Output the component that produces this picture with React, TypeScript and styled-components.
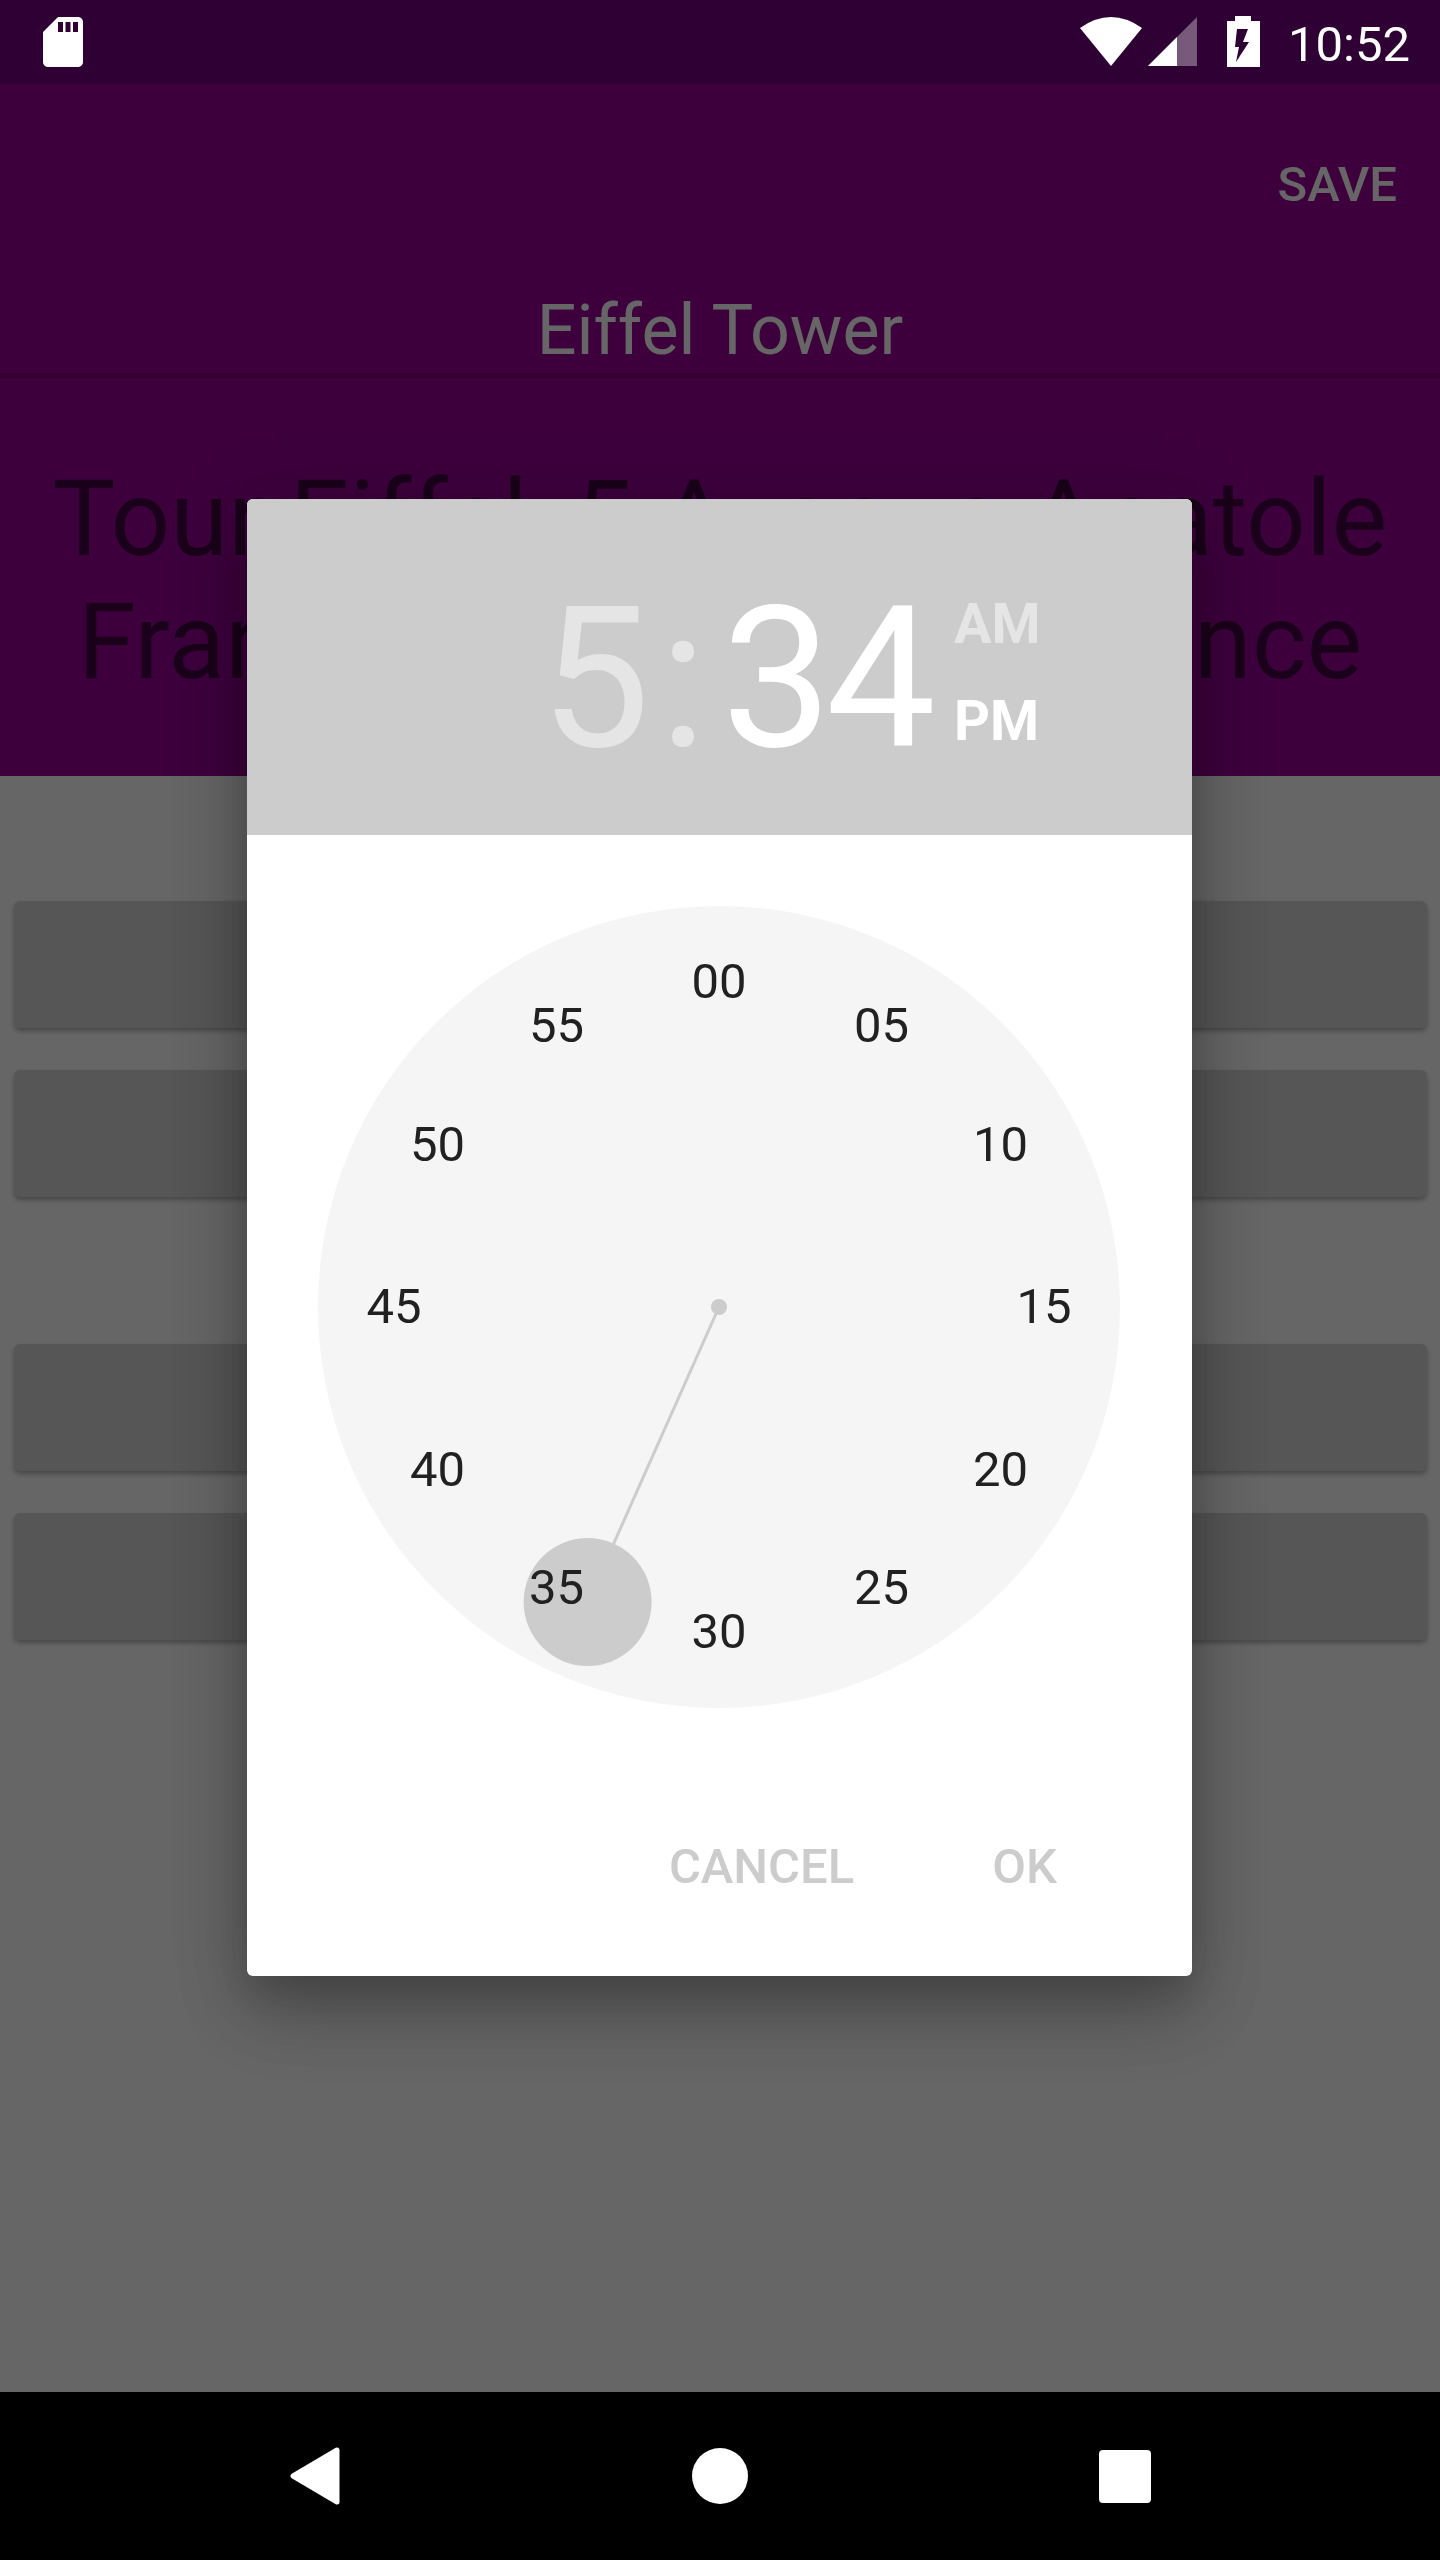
import React from "react";
import styled, { createGlobalStyle } from "styled-components";

const GlobalStyle = createGlobalStyle`
  html, body {
    margin: 0;
    padding: 0;
    background: #000;
  }
  body {
    font-family: Roboto, "Liberation Sans", sans-serif;
  }
`;

const Screen = styled.div`
  width: 1440px;
  height: 2560px;
  display: flex;
  flex-direction: column;
  overflow: hidden;
`;

const StatusBar = styled.div`
  height: 84px;
  flex: none;
  background: #2f0034;
  display: flex;
  align-items: flex-start;
  justify-content: space-between;
  color: #fff;
`;

const SdIcon = styled.svg`
  width: 60px;
  height: 60px;
  margin: 12px 0 0 33px;
  fill: #fff;
`;

const StatusRight = styled.div`
  display: flex;
  align-items: flex-start;
  padding: 16px 30px 0 0;
`;

const StatusIcon = styled.svg<{ $gap: number }>`
  margin-right: ${(p) => p.$gap}px;
  display: block;
`;

const Clock = styled.div`
  font-size: 49px;
  line-height: 58px;
  letter-spacing: 0;
`;

const Content = styled.div`
  flex: 1;
  position: relative;
  background: #fff;
  min-height: 0;
`;

const Toolbar = styled.div`
  height: 289px;
  background: #990099;
  display: flex;
  flex-direction: column;
  color: #fff;
  box-sizing: border-box;
  box-shadow: 0 5px 0 rgba(0, 0, 0, 0.15);
  position: relative;
`;

const SaveButton = styled.div`
  align-self: flex-end;
  margin: 72px 43px 0 0;
  font-size: 49px;
  font-weight: 500;
  line-height: 58px;
`;

const PlaceTitle = styled.div`
  margin-top: 75px;
  text-align: center;
  font-size: 70px;
  line-height: 82px;
`;

const Address = styled.div`
  height: 403px;
  background: #990099;
  box-sizing: border-box;
  padding: 85px 40px 0;
  text-align: center;
  font-size: 105px;
  line-height: 123px;
  color: rgba(0, 0, 0, 0.55);
`;

const Form = styled.div`
  padding: 125px 13px 0 14px;
  display: flex;
  flex-direction: column;
`;

const Field = styled.div<{ $after: number }>`
  height: 127px;
  margin-bottom: ${(p) => p.$after}px;
  background: #d8d8d8;
  border-radius: 6px;
  box-shadow: 0 3px 5px rgba(0, 0, 0, 0.3);
`;

const Scrim = styled.div`
  position: absolute;
  inset: 0;
  background: rgba(0, 0, 0, 0.6);
`;

const Dialog = styled.div`
  position: absolute;
  left: 247px;
  top: 415px;
  width: 945px;
  height: 1477px;
  background: #fff;
  border-radius: 6px;
  overflow: hidden;
  display: flex;
  flex-direction: column;
`;

const DialogShadow = styled.div`
  position: absolute;
  left: 247px;
  top: 415px;
  width: 945px;
  height: 1477px;
  border-radius: 6px;
  box-shadow: 0 38px 70px rgba(0, 0, 0, 0.2), 0 14px 80px rgba(0, 0, 0, 0.18), 0 16px 30px rgba(0, 0, 0, 0.08);
`;

const TimeHeader = styled.div`
  height: 336px;
  flex: none;
  background: #ccc;
  display: flex;
  align-items: flex-start;
  padding: 65px 0 0 293px;
  box-sizing: border-box;
  color: #fff;
`;

const TimeDigits = styled.div<{ $dim?: boolean }>`
  font-size: 196px;
  line-height: 230px;
  letter-spacing: ${(p) => (p.$dim ? "0" : "-6px")};
  color: ${(p) => (p.$dim ? "#e5e5e5" : "#fff")};
`;

const TimeColon = styled(TimeDigits)`
  margin: 0 15px 0 9px;
  letter-spacing: 0;
  color: #e5e5e5;
`;

const Meridiem = styled.div`
  display: flex;
  flex-direction: column;
  margin-left: 24px;
  padding-top: 27px;
  gap: 31px;
`;

const MeridiemLabel = styled.div<{ $dim?: boolean }>`
  font-size: 56px;
  font-weight: 700;
  line-height: 66px;
  color: ${(p) => (p.$dim ? "#e5e5e5" : "#fff")};
`;

const Dial = styled.div`
  position: relative;
  width: 802px;
  height: 802px;
  margin: 71px 0 0 71px;
  border-radius: 50%;
  background: #f5f5f5;
`;

const DialArt = styled.svg`
  position: absolute;
  inset: 0;
`;

const DialNumber = styled.div`
  position: absolute;
  width: 80px;
  height: 58px;
  margin: -29px 0 0 -40px;
  text-align: center;
  font-size: 49px;
  line-height: 58px;
  color: #212121;
`;

const Actions = styled.div`
  flex: 1;
  display: flex;
  justify-content: flex-end;
  align-items: flex-start;
  padding: 130px 135px 0 0;
  gap: 138px;
`;

const ActionButton = styled.div`
  font-size: 49px;
  font-weight: 500;
  line-height: 58px;
  color: #ccc;
`;

const NavBar = styled.div`
  height: 168px;
  flex: none;
  background: #000;
  display: flex;
  align-items: center;
  justify-content: space-between;
  padding: 0 289px 0 290px;
  box-sizing: border-box;
`;

const NavIcon = styled.svg`
  display: block;
  fill: #fff;
`;

const CENTER = 401;
const RADIUS = 325;
const MINUTES = ["00", "05", "10", "15", "20", "25", "30", "35", "40", "45", "50", "55"];

function App() {
  const handAngle = (204 * Math.PI) / 180;
  const handX = CENTER + 323 * Math.sin(handAngle);
  const handY = CENTER - 323 * Math.cos(handAngle);
  return (
    <Screen>
      <GlobalStyle />
      <StatusBar>
        <SdIcon viewBox="0 0 24 24">
          <path d="M18 2h-8L4.02 8 4 20c0 1.1.9 2 2 2h12c1.1 0 2-.9 2-2V4c0-1.1-.9-2-2-2zm-6 6h-2V4h2v4zm3 0h-2V4h2v4zm3 0h-2V4h2v4z" />
        </SdIcon>
        <StatusRight>
          <StatusIcon $gap={6} width="62" height="52" viewBox="0 0 62 52">
            <path d="M0 12 Q31 -10 62 12 L31 50 Z" fill="#fff" />
          </StatusIcon>
          <StatusIcon $gap={30} width="49" height="52" viewBox="0 0 49 52">
            <path d="M0 50 L49 1 V50 Z" fill="#fff" fillOpacity="0.35" />
            <path d="M0 50 L29 21 V50 Z" fill="#fff" />
          </StatusIcon>
          <StatusIcon $gap={28} width="33" height="52" viewBox="0 0 33 52">
            <path
              fillRule="evenodd"
              d="M8 0 H24 V5 H33 V51 H0 V5 H8 Z M10 13 H21 L16 26 H22 L9 46 L12 31 H8 Z"
              fill="#fff"
            />
          </StatusIcon>
          <Clock>10:52</Clock>
        </StatusRight>
      </StatusBar>

      <Content>
        <Toolbar>
          <SaveButton>SAVE</SaveButton>
          <PlaceTitle>Eiffel Tower</PlaceTitle>
        </Toolbar>
        <Address>Tour Eiffel, 5 Avenue Anatole France, 75007 Paris, France</Address>
        <Form>
          <Field $after={42} />
          <Field $after={147} />
          <Field $after={42} />
          <Field $after={0} />
        </Form>
        <Scrim />
        <DialogShadow />
        <Dialog>
          <TimeHeader>
            <TimeDigits $dim>5</TimeDigits>
            <TimeColon>:</TimeColon>
            <TimeDigits>34</TimeDigits>
            <Meridiem>
              <MeridiemLabel $dim>AM</MeridiemLabel>
              <MeridiemLabel>PM</MeridiemLabel>
            </Meridiem>
          </TimeHeader>
          <Dial>
            <DialArt width="802" height="802" viewBox="0 0 802 802">
              <line x1={CENTER} y1={CENTER} x2={handX} y2={handY} stroke="#ccc" strokeWidth="3" />
              <circle cx={CENTER} cy={CENTER} r="8" fill="#ccc" />
              <circle cx={handX} cy={handY} r="64" fill="#ccc" />
            </DialArt>
            {MINUTES.map((label, i) => {
              const a = (i * 30 * Math.PI) / 180;
              return (
                <DialNumber
                  key={label}
                  style={{ left: CENTER + RADIUS * Math.sin(a), top: CENTER - RADIUS * Math.cos(a) }}
                >
                  {label}
                </DialNumber>
              );
            })}
          </Dial>
          <Actions>
            <ActionButton>CANCEL</ActionButton>
            <ActionButton>OK</ActionButton>
          </Actions>
        </Dialog>
      </Content>

      <NavBar>
        <NavIcon width="50" height="58" viewBox="0 0 50 58">
          <path d="M47 3 V55 L3 29 Z" stroke="#fff" strokeWidth="5" strokeLinejoin="round" />
        </NavIcon>
        <NavIcon width="56" height="56" viewBox="0 0 56 56">
          <circle cx="28" cy="28" r="28" />
        </NavIcon>
        <NavIcon width="52" height="53" viewBox="0 0 52 53">
          <rect width="52" height="53" rx="4" />
        </NavIcon>
      </NavBar>
    </Screen>
  );
}

export default App;
